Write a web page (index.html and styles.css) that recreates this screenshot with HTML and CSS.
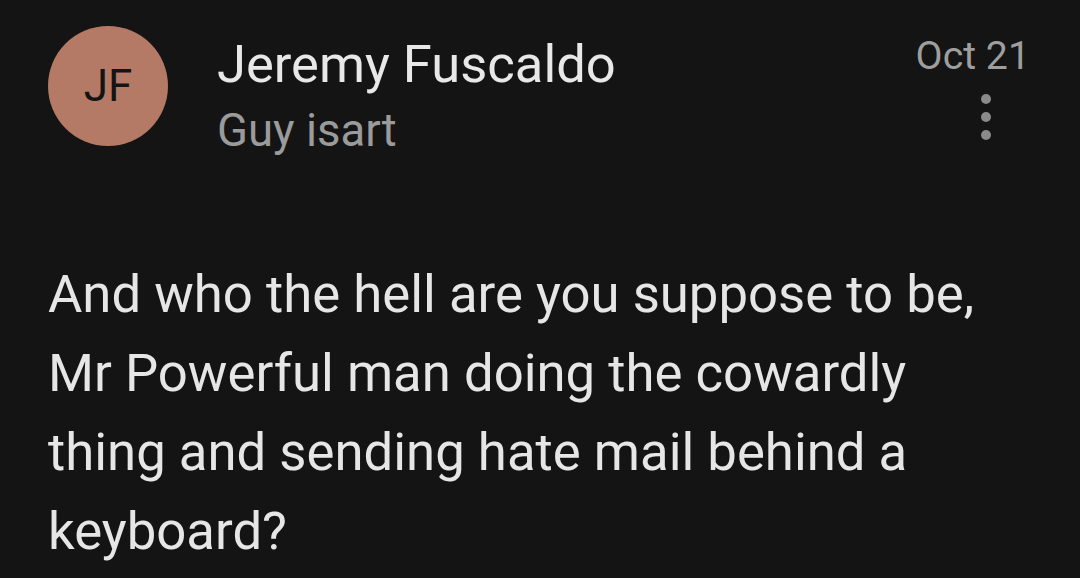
FILE: index.html
```html
<!DOCTYPE html>
<html lang="en">
<head>
  <meta charset="UTF-8">
  <meta name="viewport" content="width=device-width, initial-scale=1.0">
  <title>Message</title>
  <link rel="stylesheet" href="styles.css">
</head>
<body>
  <div class="message">
    <div class="header">
      <div class="avatar">JF</div>
      <div class="sender">
        <div class="name">Jeremy Fuscaldo</div>
        <div class="subject">Guy isart</div>
      </div>
      <div class="meta">
        <div class="date">Oct 21</div>
        <div class="more">
          <span class="dot"></span>
          <span class="dot"></span>
          <span class="dot"></span>
        </div>
      </div>
    </div>
    <p class="body-text">And who the hell are you suppose to be, Mr Powerful man doing the cowardly thing and sending hate mail behind a keyboard?</p>
  </div>
</body>
</html>
```

FILE: styles.css
```css
* {
  box-sizing: border-box;
  margin: 0;
  padding: 0;
  font-family: Roboto, "Liberation Sans", sans-serif;
}

body {
  background-color: #141414;
  color: #e6e6e6;
  height: 100vh;
  overflow: hidden;
}

.message {
  padding: 26px 50px 0 48px;
}

.header {
  display: flex;
  align-items: flex-start;
}

.avatar {
  width: 120px;
  height: 120px;
  border-radius: 50%;
  background-color: #b57a66;
  color: #141414;
  font-size: 44px;
  display: flex;
  align-items: center;
  justify-content: center;
  flex-shrink: 0;
}

.sender {
  flex: 1;
  margin-left: 49px;
  padding-top: 7px;
}

.name {
  font-size: 52.5px;
  line-height: 62px;
  color: #e8e8e8;
}

.subject {
  font-size: 45.5px;
  line-height: 72px;
  color: #9b9b9b;
}

.meta {
  display: flex;
  flex-direction: column;
  align-items: flex-end;
  padding-top: 6px;
}

.date {
  font-size: 39.3px;
  line-height: 48px;
  color: #9e9e9e;
}

.more {
  display: flex;
  flex-direction: column;
  gap: 8px;
  margin-top: 14px;
  margin-right: 39px;
}

.dot {
  width: 10px;
  height: 10px;
  border-radius: 50%;
  background-color: #8a8a8a;
}

.body-text {
  margin-top: 88px;
  font-size: 52.7px;
  line-height: 79px;
  color: #e6e6e6;
  max-width: 960px;
}
```
